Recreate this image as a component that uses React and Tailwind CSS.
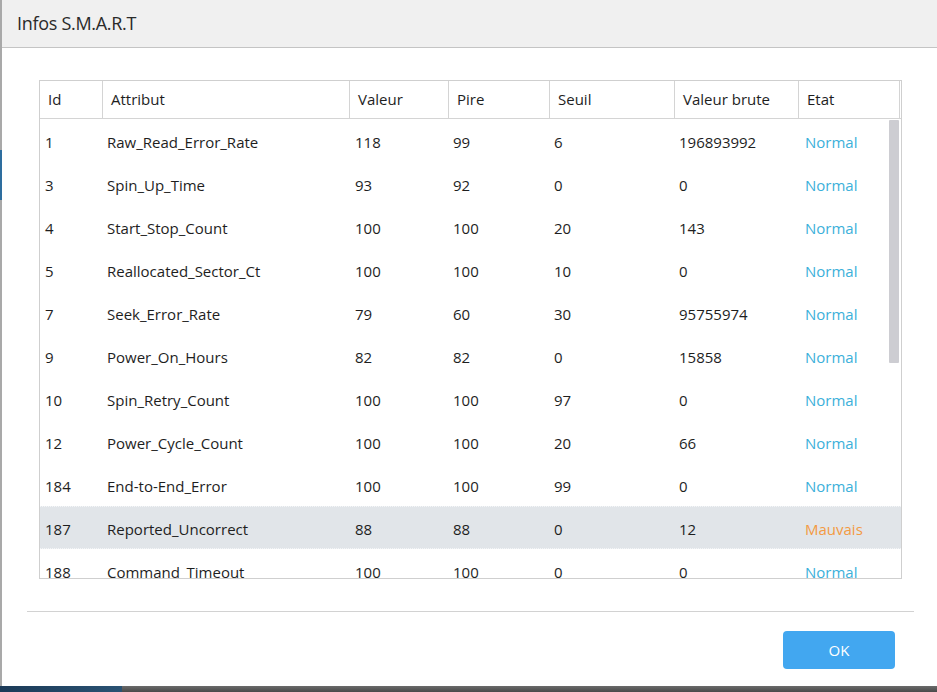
import React from "react";

const rows = [
  ["1", "Raw_Read_Error_Rate", "118", "99", "6", "196893992", "Normal"],
  ["3", "Spin_Up_Time", "93", "92", "0", "0", "Normal"],
  ["4", "Start_Stop_Count", "100", "100", "20", "143", "Normal"],
  ["5", "Reallocated_Sector_Ct", "100", "100", "10", "0", "Normal"],
  ["7", "Seek_Error_Rate", "79", "60", "30", "95755974", "Normal"],
  ["9", "Power_On_Hours", "82", "82", "0", "15858", "Normal"],
  ["10", "Spin_Retry_Count", "100", "100", "97", "0", "Normal"],
  ["12", "Power_Cycle_Count", "100", "100", "20", "66", "Normal"],
  ["184", "End-to-End_Error", "100", "100", "99", "0", "Normal"],
  ["187", "Reported_Uncorrect", "88", "88", "0", "12", "Mauvais"],
  ["188", "Command_Timeout", "100", "100", "0", "0", "Normal"],
];

const headers = ["Id", "Attribut", "Valeur", "Pire", "Seuil", "Valeur brute", "Etat"];
const widths = ["w-[63px]", "w-[247px]", "w-[99px]", "w-[101px]", "w-[125px]", "w-[124px]", "w-[101px]"];
const bodyPad = ["pl-[5px]", "pl-[4px]", "pl-[5px]", "pl-[4px]", "pl-[4px]", "pl-[4px]", "pl-[6px]"];

export default function App() {
  return (
    <div
      className="w-[937px] h-[692px] overflow-hidden flex flex-col bg-white text-[#1e1e1e]"
      style={{ fontFamily: '"Open Sans", "Noto Sans", sans-serif' }}
    >
      <div className="flex flex-1 min-h-0">
        <div className="w-[2px] flex flex-col bg-[#a9a9a9]">
          <div className="h-[150px]" />
          <div className="h-[50px] bg-[#2e6e9f]" />
        </div>
        <div className="flex-1 flex flex-col bg-white">
          <div className="h-[48px] shrink-0 bg-[#f0f0f0] border-b border-[#c4c4c4] flex items-center pl-[15px]">
            <span className="text-[18px] text-[#2a2a2a] tracking-[-0.3px]">Infos S.M.A.R.T</span>
          </div>
          <div className="pl-[37px] pt-[32px]">
            <div className="w-[863px] h-[499px] border border-[#cfcfcf] flex flex-col overflow-hidden relative">
              <div className="flex h-[38px] shrink-0 border-b border-[#d4d4d4]">
                {headers.map((h, i) => (
                  <div
                    key={h}
                    className={`${widths[i]} shrink-0 border-r border-[#d4d4d4] flex items-center pl-[8px] text-[15px]`}
                  >
                    {h}
                  </div>
                ))}
              </div>
              <div className="flex-1 min-h-0 overflow-hidden flex flex-col">
                {rows.map((r) => {
                  const bad = r[6] === "Mauvais";
                  return (
                    <div
                      key={r[0]}
                      className={`flex h-[43px] shrink-0 items-center pt-[3px] text-[15px] ${
                        bad ? "bg-[#e1e5e9] border-y border-dotted border-[#f4f6f8]" : ""
                      }`}
                    >
                      {r.map((c, i) => (
                        <div
                          key={i}
                          className={`${widths[i]} shrink-0 ${bodyPad[i]} ${
                            i === 6 ? (bad ? "text-[#f39a43]" : "text-[#3bb0da]") : ""
                          }`}
                        >
                          {c}
                        </div>
                      ))}
                    </div>
                  );
                })}
              </div>
              <div className="absolute left-[849px] top-[39px] w-[10px] h-[243px] bg-[#cdcdd2] rounded-[1px]" />
            </div>
          </div>
          <div className="mt-[32px] ml-[25px] mr-[23px] border-t border-[#d2d2d2]" />
          <div className="flex justify-end pr-[42px] pt-[19px]">
            <button className="w-[112px] h-[38px] rounded-[4px] bg-[#42a7f0] text-white text-[15px]">
              OK
            </button>
          </div>
        </div>
      </div>
      <div className="h-[6px] shrink-0 flex">
        <div className="w-[122px] bg-gradient-to-r from-[#1c3b58] to-[#2a5273]" />
        <div className="flex-1 bg-gradient-to-b from-[#6a6a6a] to-[#4a4a4a]" />
      </div>
    </div>
  );
}
